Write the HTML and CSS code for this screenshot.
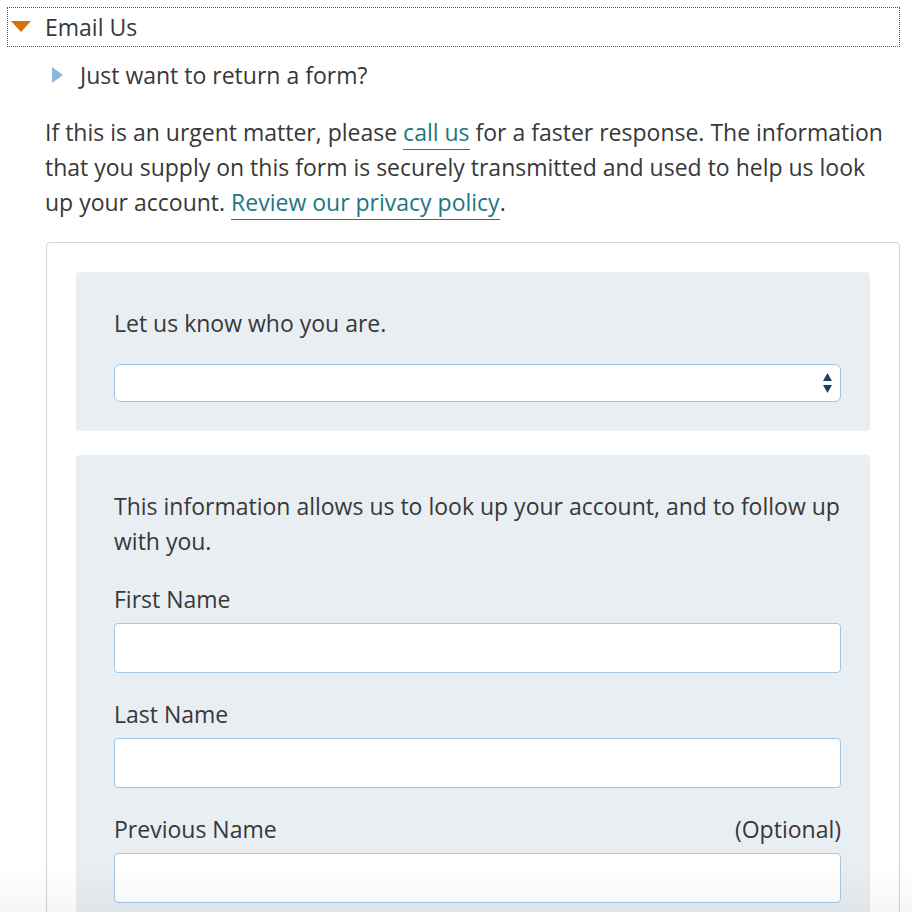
FILE: index.html
```html
<!DOCTYPE html>
<html>
<head>
<meta charset="utf-8">
<link rel="stylesheet" href="styles.css">
</head>
<body>
<div class="page">
  <div class="acc-head">
    <span class="tri-down"></span>
    <span class="acc-title">Email Us</span>
  </div>
  <div class="content">
    <div class="sub-head">
      <span class="tri-right"></span>
      <span>Just want to return a form?</span>
    </div>
    <p class="intro">If this is an urgent matter, please <a href="#" class="lnk">call us</a> for a faster response. The information that you supply on this form is securely transmitted and used to help us look up your account. <a href="#" class="lnk">Review our privacy policy</a>.</p>
    <div class="card">
      <div class="panel panel-who">
        <div class="label">Let us know who you are.</div>
        <div class="select">
          <svg class="updown" width="9" height="22" viewBox="0 0 9 22"><path d="M4.5 1 L9 9 L0 9 Z" fill="#1d3f6b"/><path d="M0 13 L9 13 L4.5 21 Z" fill="#1d3f6b"/></svg>
        </div>
      </div>
      <div class="panel panel-info">
        <div class="desc">This information allows us to look up your account, and to follow up with you.</div>
        <div class="field">
          <div class="label-row"><span>First Name</span></div>
          <div class="input"></div>
        </div>
        <div class="field">
          <div class="label-row"><span>Last Name</span></div>
          <div class="input"></div>
        </div>
        <div class="field">
          <div class="label-row"><span>Previous Name</span><span>(Optional)</span></div>
          <div class="input"></div>
        </div>
      </div>
    </div>
  </div>
</div>
<div class="fade"></div>
</body>
</html>
```
FILE: styles.css
```css
html, body {
  margin: 0;
  padding: 0;
  background: #fff;
  overflow: hidden;
}
body {
  font-family: "Open Sans", "Noto Sans", sans-serif;
  font-size: 23px;
  line-height: 35px;
  color: #383838;
}
.page {
  padding: 7px 12px 0 7px;
}
.acc-head {
  height: 38px;
  border: 1px dotted #555;
  display: flex;
  align-items: center;
  padding-left: 3px;
}
.tri-down {
  width: 0;
  height: 0;
  border-left: 10px solid transparent;
  border-right: 10px solid transparent;
  border-top: 11px solid #dc6e08;
  margin-right: 14px;
  margin-top: -2px;
}
.acc-title {
  color: #383838;
}
.content {
  padding-left: 38px;
}
.sub-head {
  display: flex;
  align-items: center;
  height: 56px;
}
.tri-right {
  width: 0;
  height: 0;
  border-top: 8.5px solid transparent;
  border-bottom: 8.5px solid transparent;
  border-left: 11px solid #8ab8dd;
  margin-left: 7px;
  margin-right: 17px;
}
.intro {
  margin: 11.5px 14px 0 0;
}
.lnk {
  color: #1d7680;
  text-decoration: none;
  border-bottom: 1.5px solid #1d7680;
  padding-bottom: 1px;
}
.card {
  margin-top: 22.5px;
  border: 1px solid #ccd6e3;
  border-radius: 4px;
  padding: 29px 29px 40px 29px;
  margin-left: 1px;
}
.panel {
  background: #e9eef3;
  border-radius: 4px;
  padding: 34px 29px 29px 38px;
}
.panel + .panel {
  margin-top: 24px;
}
.select {
  margin-top: 23px;
  height: 36px;
  background: #fff;
  border: 1px solid #9dc3e4;
  border-radius: 6px;
  display: flex;
  align-items: center;
  justify-content: flex-end;
  padding-right: 8px;
}
.updown {
  display: block;
}
.desc {
  margin: 0;
}
.field {
  margin-top: 23px;
}
.field + .field {
  margin-top: 24px;
}
.label-row {
  display: flex;
  justify-content: space-between;
}
.input {
  margin-top: 6px;
  height: 48px;
  background: #fff;
  border: 1px solid #a3c8e6;
  border-radius: 4px;
}
.fade {
  position: fixed;
  left: 0;
  right: 0;
  bottom: 0;
  height: 48px;
  background: linear-gradient(to bottom, rgba(0,0,0,0), rgba(0,0,0,0.035));
  pointer-events: none;
}
```
